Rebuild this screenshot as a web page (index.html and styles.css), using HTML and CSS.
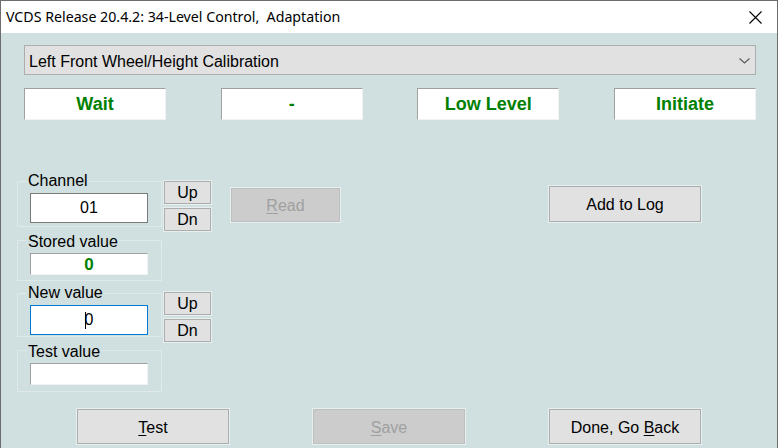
FILE: index.html
```html
<!DOCTYPE html>
<html>
<head>
<meta charset="utf-8">
<title>VCDS Adaptation</title>
<link rel="stylesheet" href="styles.css">
</head>
<body>
<div class="window">
  <div class="titlebar">
    <span class="title">VCDS Release 20.4.2: 34-Level Control,&nbsp; Adaptation</span>
    <svg class="close" width="13" height="13" viewBox="0 0 13 13"><path d="M0.5 0.5 L12.5 12.5 M12.5 0.5 L0.5 12.5" stroke="#000" stroke-width="1.1" fill="none"/></svg>
  </div>
  <div class="main">
    <div class="select">
      <span>Left Front Wheel/Height Calibration</span>
      <svg class="chev" width="11" height="6" viewBox="0 0 11 6"><path d="M0.5 0.5 L5.5 5 L10.5 0.5" stroke="#606060" stroke-width="1.3" fill="none"/></svg>
    </div>
    <div class="status">
      <div class="stat">Wait</div>
      <div class="stat">-</div>
      <div class="stat">Low Level</div>
      <div class="stat">Initiate</div>
    </div>
    <div class="middle">
      <div class="fields">
        <div class="pair">
          <div class="groups">
            <div class="group g-channel">
              <div class="glabel">Channel</div>
              <div class="input">01</div>
            </div>
            <div class="group g-stored">
              <div class="glabel">Stored value</div>
              <div class="box value">0</div>
            </div>
          </div>
          <div class="updn">
            <button class="btn small"><span>Up</span></button>
            <button class="btn small"><span>Dn</span></button>
          </div>
        </div>
        <div class="pair pair2">
          <div class="groups">
            <div class="group g-new">
              <div class="glabel">New value</div>
              <div class="input focus"><span class="caret"></span>0</div>
            </div>
            <div class="group g-test">
              <div class="glabel">Test value</div>
              <div class="box"></div>
            </div>
          </div>
          <div class="updn updn2">
            <button class="btn small"><span>Up</span></button>
            <button class="btn small"><span>Dn</span></button>
          </div>
        </div>
      </div>
      <button class="btn read" disabled><span><u>R</u>ead</span></button>
      <button class="btn addlog"><span>Add to Log</span></button>
    </div>
    <div class="actions">
      <button class="btn wide"><span><u>T</u>est</span></button>
      <button class="btn wide disabled" disabled><span><u>S</u>ave</span></button>
      <button class="btn wide"><span>Done, Go <u>B</u>ack</span></button>
    </div>
  </div>
</div>
</body>
</html>
```

FILE: styles.css
```css
html, body {
  margin: 0;
  padding: 0;
  background: #d0dfdf;
}
body {
  font-family: "Liberation Sans", Arial, sans-serif;
  font-size: 16px;
  color: #000;
}
.window {
  width: 778px;
  height: 448px;
  box-sizing: border-box;
  border: 1px solid #6d6d6d;
  border-bottom: none;
  background: #d0dfdf;
  overflow: hidden;
}
.titlebar {
  height: 32px;
  background: #fff;
  display: flex;
  align-items: center;
  justify-content: space-between;
  padding: 0 15px 1px 5px;
  box-sizing: border-box;
}
.title {
  font-family: "Noto Sans", "Open Sans", sans-serif;
  font-size: 14.2px;
  color: #000;
  white-space: pre;
}
.close {
  display: block;
  margin-top: 1px;
}
.main {
  padding: 12px 21px 0 23px;
}
.select {
  height: 30px;
  box-sizing: border-box;
  border: 1px solid #adadad;
  background: #e1e1e1;
  display: flex;
  align-items: center;
  justify-content: space-between;
  padding: 3px 5px 0 4px;
  line-height: 18px;
}
.chev {
  display: block;
  margin-top: -2px;
}
.status {
  display: flex;
  justify-content: space-between;
  margin-top: 13px;
}
.stat {
  width: 142px;
  height: 32px;
  box-sizing: border-box;
  background: #fff;
  border: 1px solid;
  border-color: #a0a0a0 #f2f2f2 #f2f2f2 #a0a0a0;
  display: flex;
  align-items: center;
  justify-content: center;
  padding-top: 1px;
  font-weight: bold;
  font-size: 18px;
  color: #008000;
}
.middle {
  display: flex;
  align-items: flex-start;
  margin-top: 61px;
  margin-left: -7px;
}
.pair {
  display: flex;
  align-items: flex-start;
}
.pair2 {
  margin-top: 12px;
}
.groups {
  width: 145px;
}
.group {
  border: 1px solid #dfe9e9;
  padding: 0 12px;
}
.glabel {
  display: block;
  width: fit-content;
  background: #d0dfdf;
  line-height: 18px;
  height: 18px;
  padding: 0 1px;
  margin-left: -3px;
}
.g-channel .glabel, .g-new .glabel {
  margin-top: -10px;
}
.g-stored .glabel, .g-test .glabel {
  margin-top: -8px;
}
.g-channel { padding-bottom: 3px; }
.g-stored { margin-top: 13px; padding-bottom: 5px; }
.g-new { padding-bottom: 1px; }
.g-test { margin-top: 13px; padding-bottom: 6px; }
.input {
  width: 118px;
  height: 30px;
  box-sizing: border-box;
  background: #fff;
  border: 1px solid #7a7a7a;
  margin-top: 3px;
  display: flex;
  align-items: center;
  justify-content: center;
  line-height: 18px;
}
.input.focus {
  border-color: #0078d7;
}
.caret {
  display: inline-block;
  width: 1px;
  height: 17px;
  background: #000;
  margin-right: -1px;
}
.box {
  width: 118px;
  height: 22px;
  box-sizing: border-box;
  background: #fff;
  border: 1px solid;
  border-color: #a0a0a0 #f2f2f2 #f2f2f2 #a0a0a0;
  margin-top: 2px;
  padding-top: 1px;
  display: flex;
  align-items: center;
  justify-content: center;
}
.box.value {
  color: #008000;
  font-weight: bold;
  font-size: 17px;
}
.btn {
  font-family: "Liberation Sans", Arial, sans-serif;
  font-size: 16px;
  color: #000;
  background: #e1e1e1;
  border: 1px solid #adadad;
  box-shadow: 0 0 0 1px #e8efef;
  box-sizing: border-box;
  padding: 2px 0 0;
  margin: 0;
  display: flex;
  align-items: center;
  justify-content: center;
  white-space: pre;
}
.btn u {
  text-decoration-thickness: 1px;
  text-underline-offset: 2px;
}
.updn {
  display: flex;
  flex-direction: column;
  gap: 4px;
  margin-left: 2px;
}
.updn2 {
  margin-top: -1px;
}
.btn.small {
  width: 47px;
  height: 23px;
  padding: 0;
}
.btn.read {
  width: 109px;
  height: 34px;
  margin-left: 20px;
  margin-top: 7px;
  background: #cccccc;
  border-color: #bfbfbf;
  color: #a0a0a0;
}
.btn.addlog {
  width: 152px;
  height: 36px;
  margin-left: 209px;
  margin-top: 5px;
}
.actions {
  display: flex;
  gap: 84px;
  margin-top: 17px;
  padding-left: 53px;
}
.btn.wide {
  width: 152px;
  height: 35px;
}
.btn.disabled {
  background: #cccccc;
  border-color: #bfbfbf;
  color: #a0a0a0;
}
```
